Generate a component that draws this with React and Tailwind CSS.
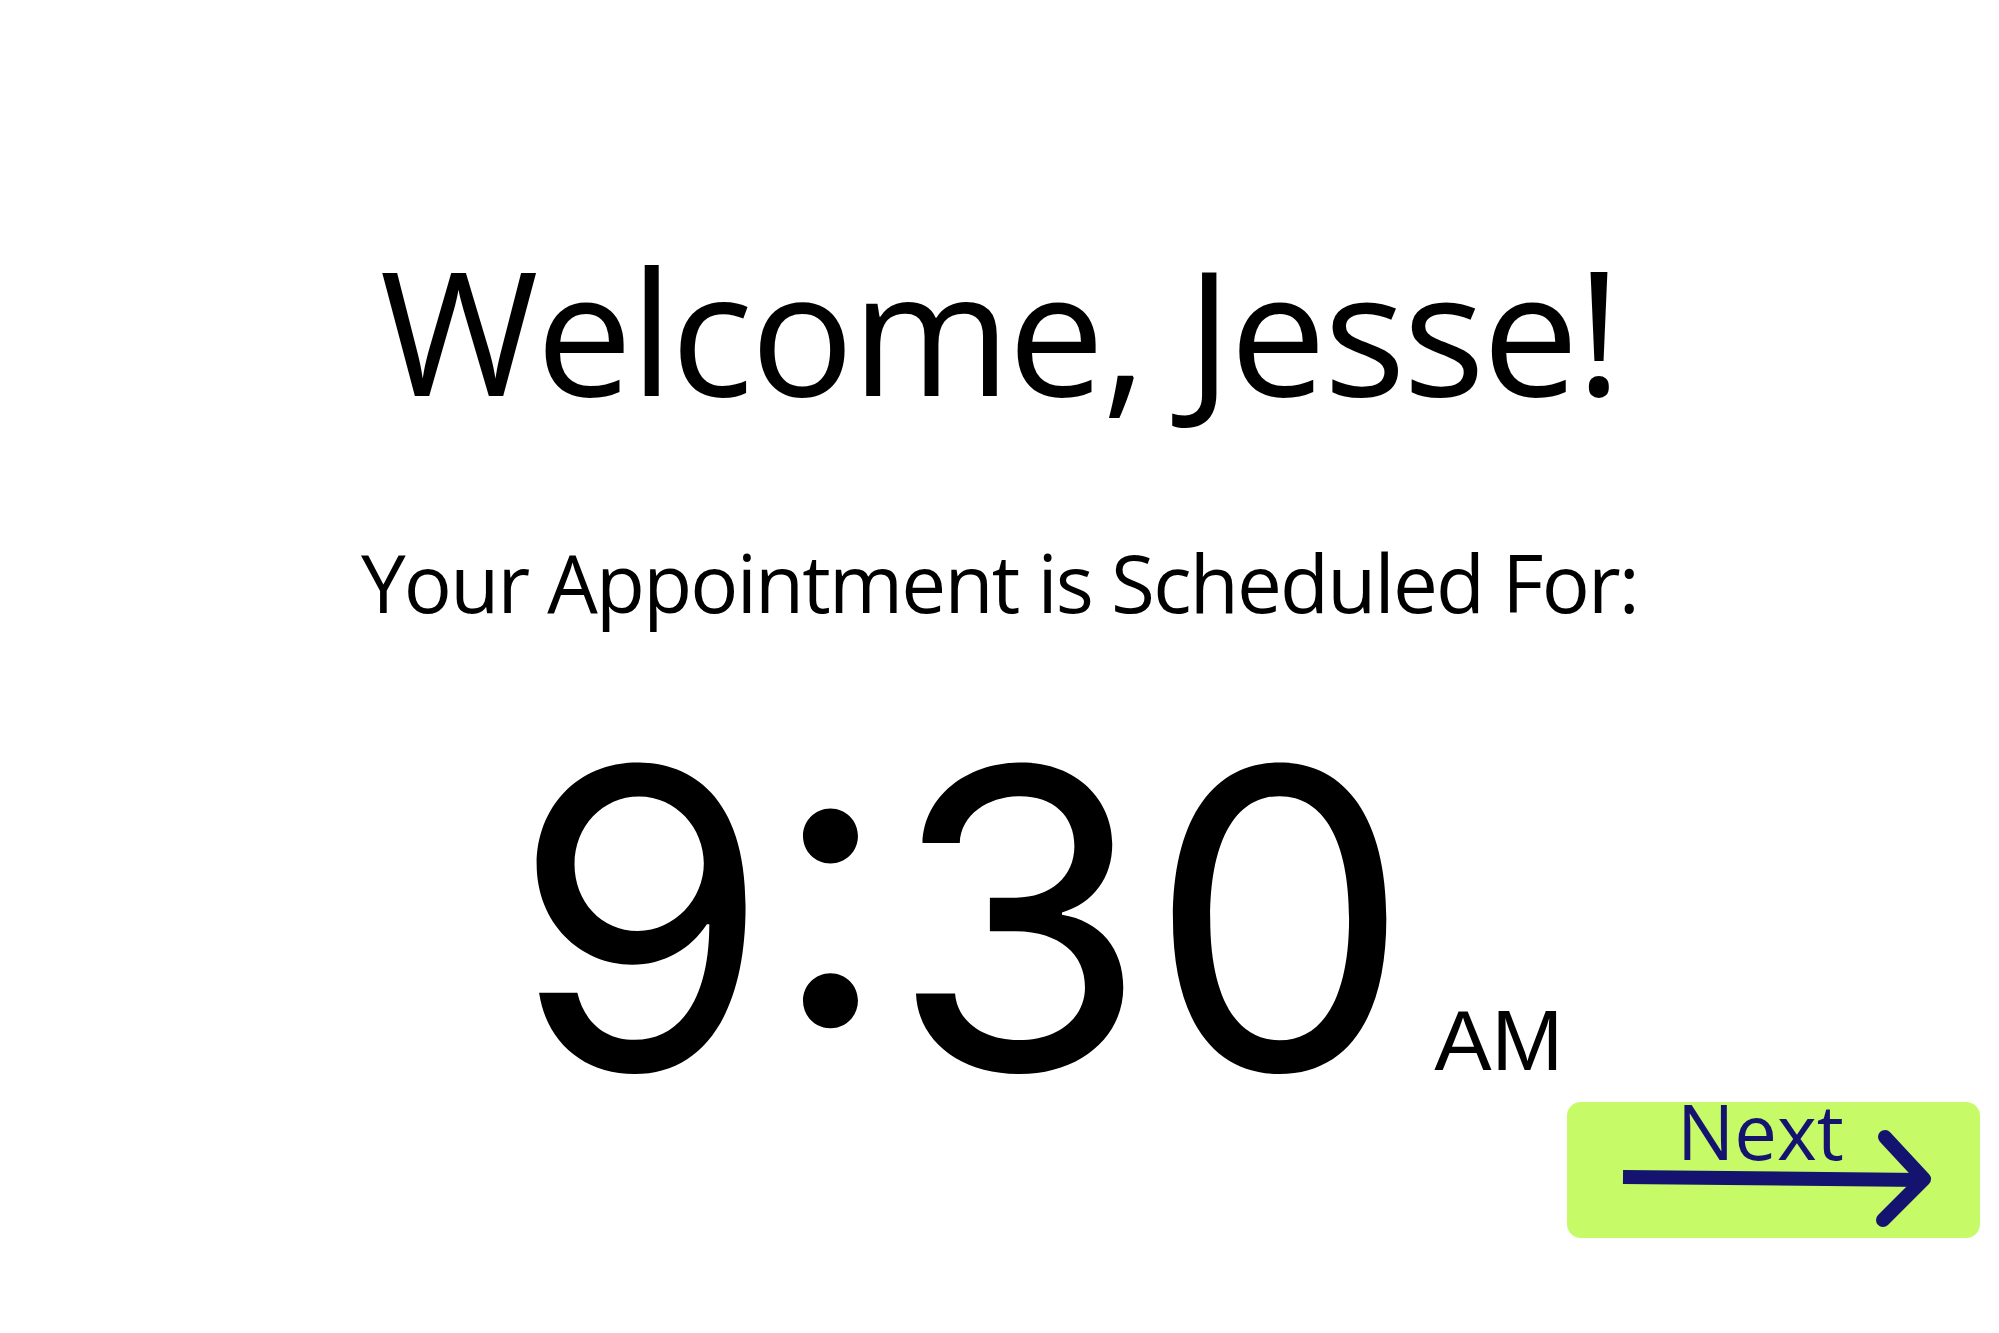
export default function App() {
  return (
    <div className="w-[1999px] h-[1333px] bg-white overflow-hidden flex flex-col items-center text-black">
      <h1
        className="mt-[243px] text-[172px] leading-none whitespace-nowrap tracking-[-2.6px]"
        style={{ fontFamily: '"Open Sans", sans-serif' }}
      >
        Welcome, Jesse!
      </h1>
      <p
        className="mt-[127px] text-[80px] leading-none whitespace-nowrap tracking-[-1.8px]"
        style={{ fontFamily: '"Open Sans", sans-serif' }}
      >
        Your Appointment is Scheduled For:
      </p>
      <div className="mt-[88px] ml-[76px] flex items-baseline">
        <span
          className="text-[417px] leading-none"
          style={{ fontFamily: 'Inter, sans-serif' }}
        >
          9:30
        </span>
        <span
          className="ml-[23px] text-[86px] leading-none"
          style={{ fontFamily: '"Liberation Sans", Arial, sans-serif' }}
        >
          AM
        </span>
      </div>
      <div className="w-full flex justify-end pr-[19px] mt-[-25px]">
        <button className="relative w-[413px] h-[136px] rounded-[14px] bg-[#c6fb67] text-[#14136f]">
          <span
            className="absolute left-[110px] top-[-9px] text-[76px] leading-none"
            style={{ fontFamily: '"Open Sans", sans-serif' }}
          >
            Next
          </span>
          <svg className="absolute inset-0" width="413" height="136" viewBox="0 0 413 136">
            <path d="M56 75 L355 78" stroke="#14136f" strokeWidth="14" fill="none" />
            <path d="M318 35 L357 77 L316 118" stroke="#14136f" strokeWidth="14" fill="none" strokeLinecap="round" strokeLinejoin="round" />
          </svg>
        </button>
      </div>
    </div>
  );
}
